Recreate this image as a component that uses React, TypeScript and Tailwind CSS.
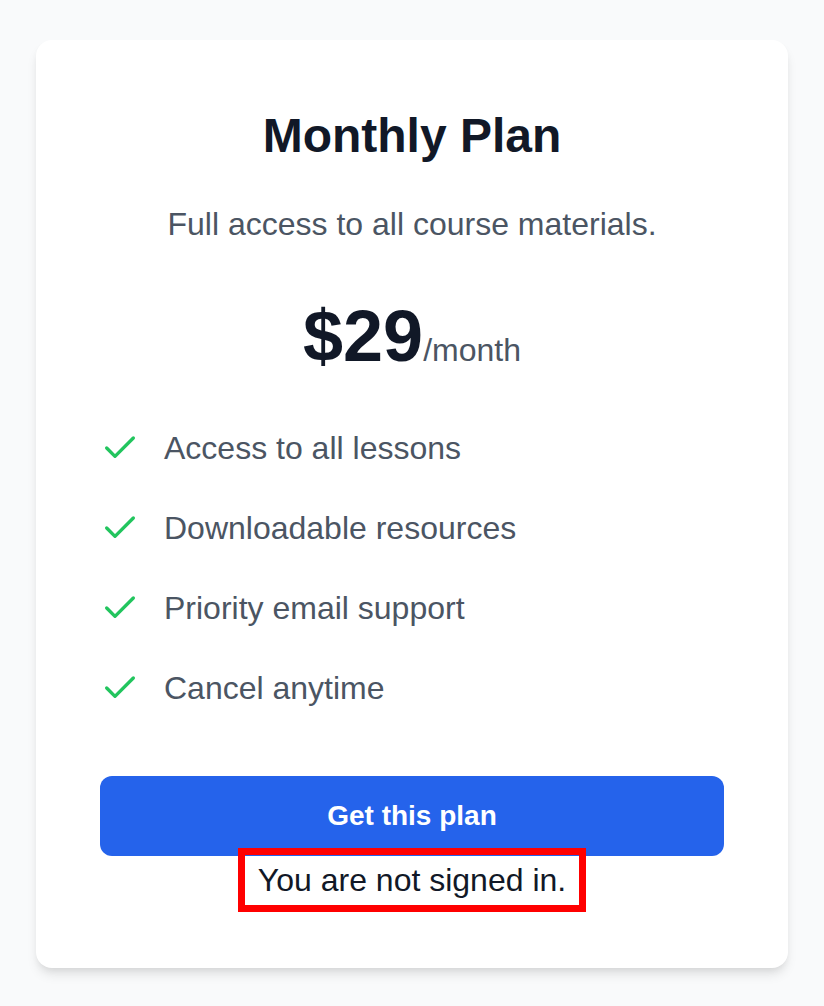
import { Check } from "lucide-react"

const features = [
  "Access to all lessons",
  "Downloadable resources",
  "Priority email support",
  "Cancel anytime",
]

export default function App() {
  return (
    <div
      className="min-h-[1006px] bg-[#f9fafb] px-[36px] pt-[40px]"
      style={{ fontFamily: '"Liberation Sans", Arial, sans-serif' }}
    >
      <div className="rounded-[16px] bg-white p-[64px] shadow-[0_8px_12px_-2px_rgba(0,0,0,0.1),0_4px_8px_-4px_rgba(0,0,0,0.1)]">
        <h1 className="text-center text-[48px] leading-[64px] font-bold text-[#111827]">
          Monthly Plan
        </h1>
        <p className="mt-[32px] text-center text-[32px] leading-[48px] text-[#4b5563]">
          Full access to all course materials.
        </p>
        <div className="mt-[48px] flex items-baseline justify-center">
          <span className="text-[72px] leading-[80px] font-bold text-[#111827]">$29</span>
          <span className="text-[32px] leading-[48px] text-[#4b5563]">/month</span>
        </div>
        <ul className="mt-[48px] flex flex-col gap-[32px]">
          {features.map((f) => (
            <li key={f} className="flex items-center gap-[24px]">
              <Check className="size-[40px] shrink-0 text-[#22c55e]" strokeWidth={2} />
              <span className="text-[32px] leading-[48px] text-[#4b5563]">{f}</span>
            </li>
          ))}
        </ul>
        <button className="mt-[64px] w-full rounded-[12px] bg-[#2563eb] py-[20px] text-[28px] leading-[40px] font-bold text-white">
          Get this plan
        </button>
        <div className="text-center">
          <span className="relative inline-block px-[12px] text-[32px] leading-[48px] text-[#111827] outline-[7px] outline-offset-[1px] outline-[#ff0000] outline-solid">
            You are not signed in.
          </span>
        </div>
      </div>
    </div>
  )
}
